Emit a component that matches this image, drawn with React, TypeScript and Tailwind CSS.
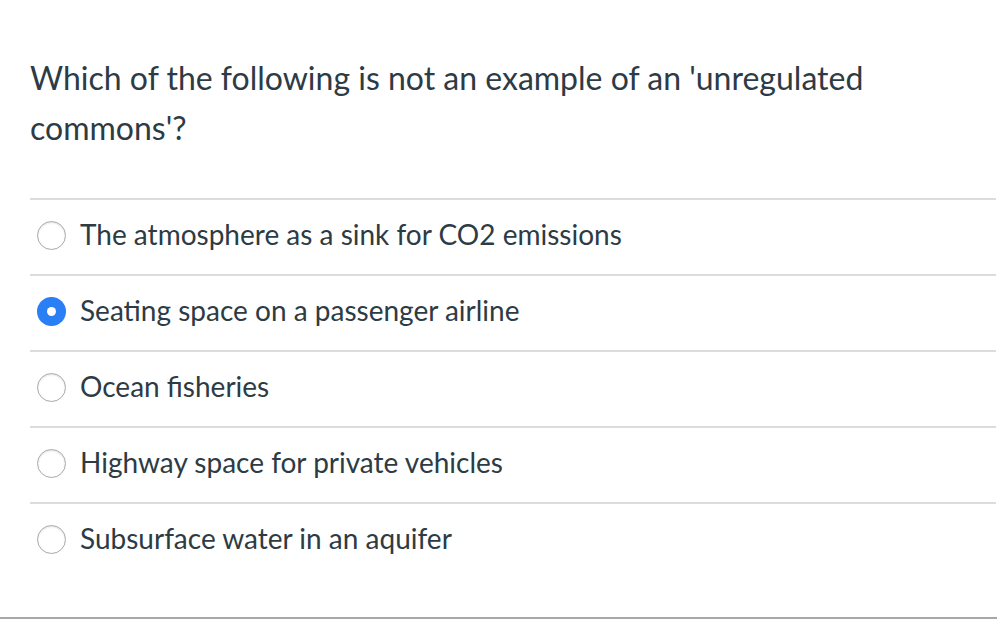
const OPTIONS = [
  "The atmosphere as a sink for CO2 emissions",
  "Seating space on a passenger airline",
  "Ocean fisheries",
  "Highway space for private vehicles",
  "Subsurface water in an aquifer",
];

function Radio({ checked }: { checked: boolean }) {
  if (checked) {
    return (
      <span className="flex h-[29px] w-[29px] shrink-0 items-center justify-center rounded-full bg-[#2b7ff5]">
        <span className="h-[9px] w-[9px] rounded-full bg-white" />
      </span>
    );
  }
  return (
    <span className="h-[29px] w-[29px] shrink-0 rounded-full border border-[#a9a9a9] bg-white shadow-[inset_0_1px_2px_rgba(0,0,0,0.12)]" />
  );
}

export default function App() {
  const selected = 1;
  return (
    <div className="h-[621px] w-[997px] bg-white font-['Lato','Noto_Sans',sans-serif] text-[#2d3b45]">
      <div className="flex h-[619px] flex-col border-b-2 border-[#a8a8a8]">
        <div className="pl-[30px] pr-[1px]">
          <p className="pt-[53px] pb-[45px] text-[32px] leading-[50px]">
            Which of the following is not an example of an 'unregulated
            <br />
            commons'?
          </p>
          <div>
            {OPTIONS.map((opt, i) => (
              <div
                key={opt}
                className="flex h-[76px] items-center gap-[14px] border-t-2 border-[#dcdcdc] pb-[4px] pl-[7px]"
              >
                <Radio checked={i === selected} />
                <span className="pb-[2px] text-[28px] leading-[32px]">{opt}</span>
              </div>
            ))}
          </div>
        </div>
      </div>
    </div>
  );
}
